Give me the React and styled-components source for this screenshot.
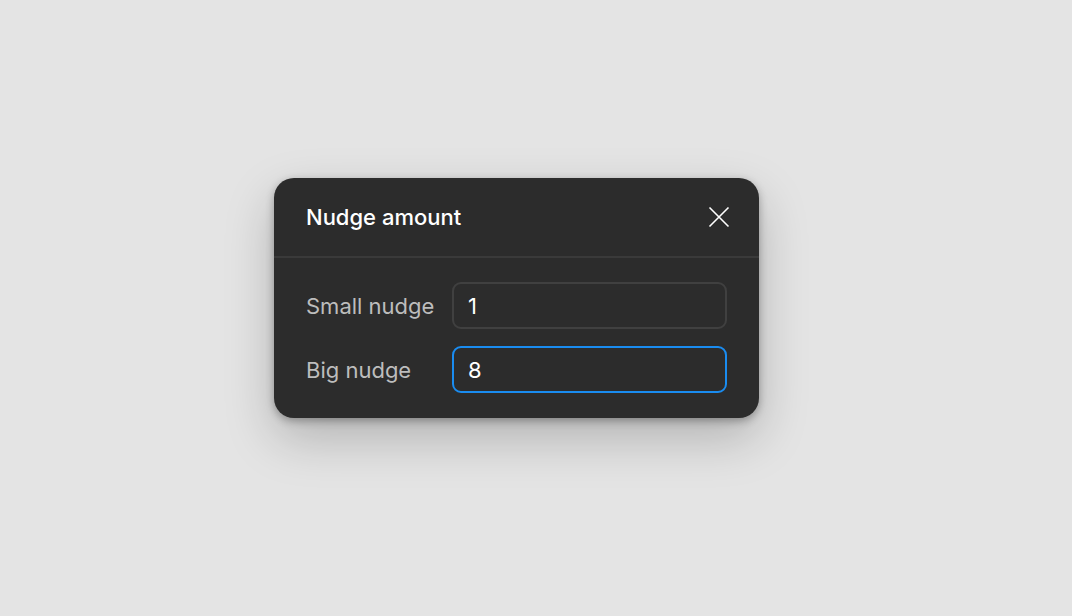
import React from "react";
import styled, { createGlobalStyle } from "styled-components";

const GlobalStyle = createGlobalStyle`
  html, body {
    margin: 0;
    padding: 0;
    background: #e4e4e4;
    font-family: Inter, "Noto Sans", sans-serif;
  }
`;

const Page = styled.div`
  width: 1072px;
  height: 616px;
  display: flex;
  justify-content: flex-start;
  padding: 178px 0 0 274px;
  box-sizing: border-box;
`;

const Dialog = styled.div`
  width: 485px;
  height: 240px;
  box-sizing: border-box;
  background: #2c2c2c;
  border-radius: 20px;
  box-shadow: 0 3px 8px rgba(0, 0, 0, 0.3), 0 20px 50px rgba(0, 0, 0, 0.22);
  display: flex;
  flex-direction: column;
`;

const Header = styled.div`
  height: 80px;
  box-sizing: border-box;
  display: flex;
  align-items: center;
  justify-content: space-between;
  padding: 0 29px 0 32px;
  border-bottom: 2px solid #3a3a3a;
`;

const Title = styled.h2`
  margin: 0;
  font-size: 22px;
  font-weight: 500;
  color: #ffffff;
`;

const CloseButton = styled.button`
  width: 22px;
  height: 22px;
  padding: 0;
  border: none;
  background: none;
  color: #ffffff;
  display: flex;
  align-items: center;
  justify-content: center;
  cursor: pointer;
`;

const Body = styled.div`
  padding: 24px 32px 25px 32px;
  display: flex;
  flex-direction: column;
  gap: 17px;
`;

const Row = styled.label`
  display: flex;
  align-items: center;
`;

const Label = styled.span`
  width: 146px;
  font-size: 22px;
  color: #bdbdbd;
`;

const Input = styled.input`
  width: 275px;
  height: 47px;
  box-sizing: border-box;
  background: #2c2c2c;
  border: 2px solid ${(p) => (p.$focused ? "#1a8cf0" : "#404040")};
  border-radius: 9px;
  padding: 0 14px;
  font-family: Inter, "Noto Sans", sans-serif;
  font-size: 22px;
  color: #ffffff;
  outline: none;
`;

export default function App() {
  return (
    <>
      <GlobalStyle />
      <Page>
        <Dialog>
          <Header>
            <Title>Nudge amount</Title>
            <CloseButton aria-label="Close">
              <svg width="22" height="22" viewBox="0 0 22 22" fill="none">
                <path d="M1.5 1.5L20.5 20.5M20.5 1.5L1.5 20.5" stroke="currentColor" strokeWidth="1.6" />
              </svg>
            </CloseButton>
          </Header>
          <Body>
            <Row>
              <Label>Small nudge</Label>
              <Input defaultValue="1" />
            </Row>
            <Row>
              <Label>Big nudge</Label>
              <Input defaultValue="8" $focused />
            </Row>
          </Body>
        </Dialog>
      </Page>
    </>
  );
}
